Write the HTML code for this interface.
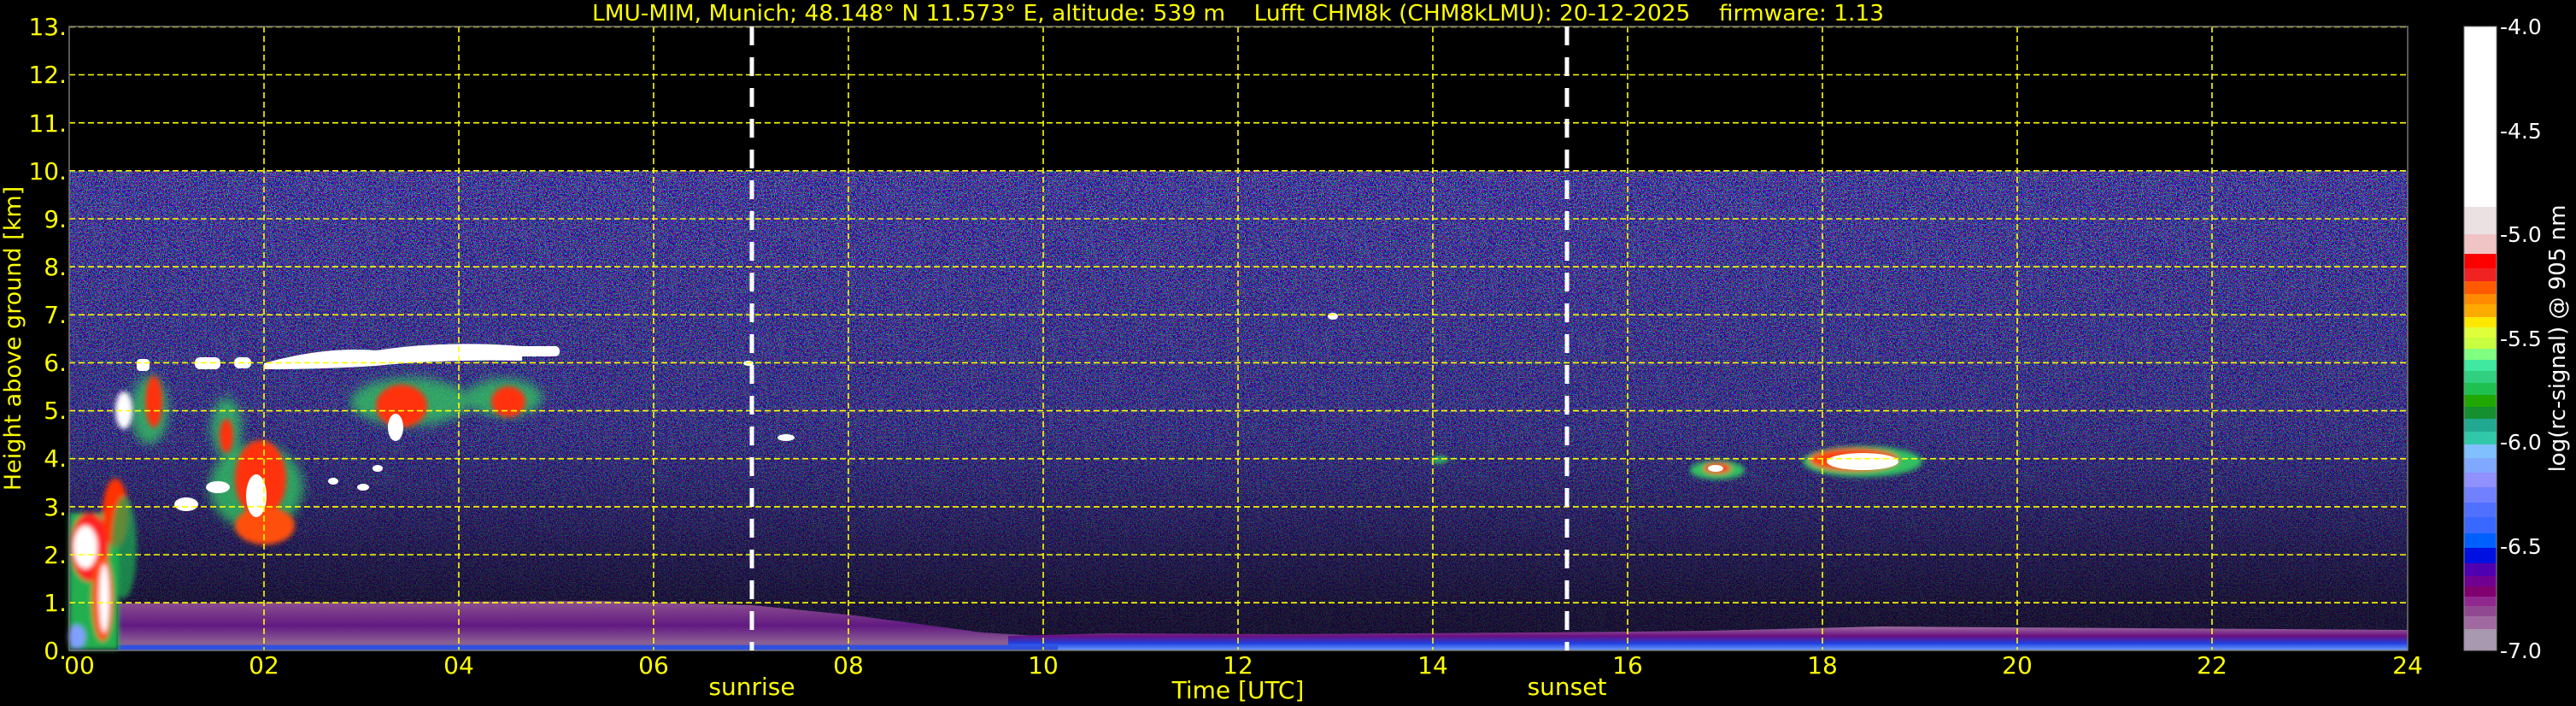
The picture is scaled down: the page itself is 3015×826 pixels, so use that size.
<!DOCTYPE html>
<html><head><meta charset="utf-8">
<style>
html,body{margin:0;padding:0;background:#000;width:3015px;height:826px;overflow:hidden}
svg{display:block}
text{font-family:"DejaVu Sans","Liberation Sans",sans-serif;fill:#ffff00;white-space:pre}
</style></head><body>
<svg width="3015" height="826" viewBox="0 0 3015 826" xmlns="http://www.w3.org/2000/svg">
<defs>
<filter id="nz" x="0" y="0" width="1" height="1" filterUnits="objectBoundingBox">
<feTurbulence type="fractalNoise" baseFrequency="0.8" numOctaves="1" seed="4" result="t"/>
<feColorMatrix in="t" values="7 -3 0 0 -2.1  -3 7 0 0 -2.2  0 -2 7 0 -1.9  0 0 0 0 1"/>
</filter>
<filter id="bl" x="-30%" y="-30%" width="160%" height="160%"><feGaussianBlur stdDeviation="3"/></filter>
<filter id="bl2" x="-30%" y="-30%" width="160%" height="160%"><feGaussianBlur stdDeviation="6"/></filter>
<linearGradient id="bg" x1="0" y1="0" x2="0" y2="1">
<stop offset="0" stop-color="#24246a"/>
<stop offset="0.5" stop-color="#1e1e58"/>
<stop offset="0.75" stop-color="#130e32"/>
<stop offset="0.9" stop-color="#0c0718"/>
<stop offset="1" stop-color="#0c0718"/>
</linearGradient>
<linearGradient id="fade" x1="0" y1="0" x2="0" y2="1">
<stop offset="0" stop-color="#fff" stop-opacity="0.75"/>
<stop offset="0.55" stop-color="#fff" stop-opacity="0.55"/>
<stop offset="0.8" stop-color="#fff" stop-opacity="0.3"/>
<stop offset="1" stop-color="#fff" stop-opacity="0.18"/>
</linearGradient>
<mask id="fm"><rect x="81" y="200" width="2737" height="561" fill="url(#fade)"/></mask>
<linearGradient id="blg" x1="0" y1="0" x2="0" y2="1">
<stop offset="0" stop-color="#9a5a9a"/>
<stop offset="0.5" stop-color="#6a1a8a"/>
<stop offset="0.85" stop-color="#9a6aa0"/>
<stop offset="1" stop-color="#3050e0"/>
</linearGradient>
<linearGradient id="blg2" x1="0" y1="0" x2="0" y2="1">
<stop offset="0" stop-color="#a070a0"/>
<stop offset="0.4" stop-color="#6a1080"/>
<stop offset="0.7" stop-color="#2040e0"/>
<stop offset="1" stop-color="#70a0ff"/>
</linearGradient>
</defs>

<rect x="81" y="200" width="2737" height="561" fill="url(#bg)"/>
<g mask="url(#fm)"><rect x="81" y="200" width="2737" height="561" filter="url(#nz)"/></g>

<path d="M138 706 L700 703 L880 708 L1000 720 L1150 740 L1230 745 L1230 761 L138 761Z" fill="url(#blg)" opacity="0.9"/>
<path d="M1180 744 L1300 741 L1500 742 L1800 740 L2000 738 L2200 733 L2500 735 L2818 737 L2818 761 L1180 761Z" fill="url(#blg2)"/>
<rect x="138" y="755" width="1100" height="6" fill="#3050e0"/>

<g filter="url(#bl)">
<rect x="81" y="600" width="58" height="160" fill="#20b050"/>
<ellipse cx="105" cy="640" rx="22" ry="40" fill="#ff2020"/>
<ellipse cx="100" cy="640" rx="14" ry="25" fill="#fff"/>
<ellipse cx="120" cy="700" rx="12" ry="50" fill="#ff5000"/>
<ellipse cx="122" cy="700" rx="6" ry="40" fill="#fff"/>
<ellipse cx="135" cy="600" rx="15" ry="40" fill="#ff3000"/>
<ellipse cx="145" cy="640" rx="15" ry="60" fill="#20b050" opacity="0.7"/>
<ellipse cx="90" cy="745" rx="10" ry="14" fill="#80a0ff"/>
</g>
<g filter="url(#bl2)" opacity="0.8">
<ellipse cx="480" cy="470" rx="70" ry="28" fill="#30c060"/>
<ellipse cx="590" cy="465" rx="45" ry="22" fill="#30c060"/>
<ellipse cx="300" cy="570" rx="55" ry="50" fill="#30c060"/>
<ellipse cx="175" cy="480" rx="22" ry="40" fill="#30c060"/>
<ellipse cx="265" cy="500" rx="18" ry="35" fill="#30c060"/>
</g>
<g filter="url(#bl)">
<ellipse cx="470" cy="475" rx="30" ry="25" fill="#ff3010"/>
<ellipse cx="595" cy="470" rx="20" ry="18" fill="#ff3010"/>
<ellipse cx="305" cy="560" rx="30" ry="45" fill="#ff3010"/>
<ellipse cx="310" cy="615" rx="35" ry="22" fill="#ff5010"/>
<ellipse cx="180" cy="470" rx="10" ry="30" fill="#ff3010"/>
<ellipse cx="145" cy="480" rx="10" ry="22" fill="#fff"/>
<ellipse cx="265" cy="510" rx="8" ry="20" fill="#ff3010"/>
</g>
<g fill="#fff">
<path d="M309 425 Q380 405 440 410 Q520 398 611 405 L611 422 Q520 420 440 428 Q380 432 309 432Z"/>
<rect x="570" y="405" width="85" height="12" rx="5"/>
<rect x="228" y="418" width="30" height="14" rx="6"/>
<rect x="274" y="418" width="20" height="13" rx="6"/>
<rect x="160" y="420" width="15" height="14" rx="4"/>
<ellipse cx="300" cy="580" rx="12" ry="25"/>
<ellipse cx="255" cy="570" rx="14" ry="7"/>
<ellipse cx="218" cy="590" rx="14" ry="8"/>
<ellipse cx="463" cy="500" rx="9" ry="16"/>
<ellipse cx="390" cy="563" rx="6" ry="4"/>
<ellipse cx="425" cy="570" rx="7" ry="4"/>
<ellipse cx="442" cy="548" rx="6" ry="4"/>
<ellipse cx="1560" cy="370" rx="6" ry="4"/>
<ellipse cx="920" cy="512" rx="10" ry="4"/>
<ellipse cx="876" cy="425" rx="6" ry="3"/>
</g>
<g filter="url(#bl)">
<ellipse cx="2180" cy="540" rx="70" ry="18" fill="#30c060"/>
<ellipse cx="2010" cy="550" rx="32" ry="11" fill="#30c060"/>
<ellipse cx="2170" cy="538" rx="52" ry="13" fill="#ff4010"/>
<ellipse cx="2010" cy="548" rx="16" ry="6" fill="#ff3010"/>
<ellipse cx="1685" cy="538" rx="10" ry="4" fill="#30c060"/>
</g>
<ellipse cx="2180" cy="540" rx="42" ry="10" fill="#fff"/>
<ellipse cx="2008" cy="548" rx="9" ry="4" fill="#fff"/>

<g stroke="#ffff00" stroke-width="1.6" stroke-dasharray="7,4" fill="none">
<path d="M81 87.5H2818M81 143.7H2818M81 199.8H2818M81 256H2818M81 312.1H2818M81 368.3H2818M81 424.4H2818M81 480.6H2818M81 536.7H2818M81 592.9H2818M81 649H2818M81 705.2H2818"/>
<path d="M309 31V761M537 31V761M765 31V761M993 31V761M1221 31V761M1449 31V761M1677 31V761M1905 31V761M2133 31V761M2361 31V761M2589 31V761"/>
<path d="M81 31.4H2818"/>
</g>
<rect x="81" y="31" width="2737" height="730" fill="none" stroke="#777" stroke-width="1.5"/>
<g stroke="#fff" stroke-width="5" stroke-dasharray="22,14">
<path d="M880 31V761M1834 31V761"/>
</g>

<text x="1449" y="24" font-size="26" text-anchor="middle" textLength="1512" lengthAdjust="spacingAndGlyphs" xml:space="preserve">LMU-MIM, Munich; 48.148° N 11.573° E, altitude: 539 m    Lufft CHM8k (CHM8kLMU): 20-12-2025    firmware: 1.13</text>

<g font-size="28" text-anchor="end">
<text x="78" y="771">0.</text><text x="78" y="715">1.</text><text x="78" y="659">2.</text><text x="78" y="603">3.</text><text x="78" y="546">4.</text><text x="78" y="490">5.</text><text x="78" y="434">6.</text><text x="78" y="378">7.</text><text x="78" y="322">8.</text><text x="78" y="266">9.</text><text x="78" y="210">10.</text><text x="78" y="154">11.</text><text x="78" y="97">12.</text><text x="78" y="41">13.</text>
</g>
<text transform="translate(24,396) rotate(-90)" font-size="27" text-anchor="middle">Height above ground [km]</text>
<g font-size="28" text-anchor="middle">
<text x="93" y="788">00</text><text x="309" y="788">02</text><text x="537" y="788">04</text><text x="765" y="788">06</text><text x="993" y="788">08</text><text x="1221" y="788">10</text><text x="1449" y="788">12</text><text x="1677" y="788">14</text><text x="1905" y="788">16</text><text x="2133" y="788">18</text><text x="2361" y="788">20</text><text x="2589" y="788">22</text><text x="2818" y="788">24</text>
<text x="880" y="813">sunrise</text><text x="1834" y="813">sunset</text>
<text x="1449" y="817">Time [UTC]</text>
</g>

<g>
<rect x="2884" y="31" width="38" height="211" fill="#fff"/>
<rect x="2884" y="242" width="38" height="33" fill="#ebe1e2"/>
<rect x="2884" y="274" width="38" height="24" fill="#f0c4c4"/>
<rect x="2884" y="297" width="38" height="18" fill="#ff0000"/>
<rect x="2884" y="314" width="38" height="16" fill="#f02222"/>
<rect x="2884" y="329" width="38" height="16" fill="#ff5a00"/>
<rect x="2884" y="344" width="38" height="13" fill="#ff8c00"/>
<rect x="2884" y="356" width="38" height="16" fill="#ffaa00"/>
<rect x="2884" y="371" width="38" height="13" fill="#ffe800"/>
<rect x="2884" y="383" width="38" height="13" fill="#dfff3a"/>
<rect x="2884" y="395" width="38" height="14" fill="#c8ff40"/>
<rect x="2884" y="408" width="38" height="14" fill="#80ff80"/>
<rect x="2884" y="421" width="38" height="14" fill="#40e8a0"/>
<rect x="2884" y="434" width="38" height="15" fill="#30d080"/>
<rect x="2884" y="448" width="38" height="15" fill="#20c050"/>
<rect x="2884" y="462" width="38" height="15" fill="#20a800"/>
<rect x="2884" y="476" width="38" height="15" fill="#158f30"/>
<rect x="2884" y="490" width="38" height="16" fill="#20a890"/>
<rect x="2884" y="505" width="38" height="16" fill="#30c8a8"/>
<rect x="2884" y="520" width="38" height="17" fill="#80c0ff"/>
<rect x="2884" y="536" width="38" height="18" fill="#80a8ff"/>
<rect x="2884" y="553" width="38" height="18" fill="#9090ff"/>
<rect x="2884" y="570" width="38" height="19" fill="#7080ff"/>
<rect x="2884" y="588" width="38" height="18" fill="#5070ff"/>
<rect x="2884" y="605" width="38" height="20" fill="#3868ff"/>
<rect x="2884" y="624" width="38" height="18" fill="#0060ff"/>
<rect x="2884" y="641" width="38" height="19" fill="#0010e0"/>
<rect x="2884" y="659" width="38" height="16" fill="#5000b0"/>
<rect x="2884" y="674" width="38" height="13" fill="#700090"/>
<rect x="2884" y="686" width="38" height="13" fill="#800070"/>
<rect x="2884" y="698" width="38" height="12" fill="#902890"/>
<rect x="2884" y="709" width="38" height="13" fill="#904890"/>
<rect x="2884" y="721" width="38" height="16" fill="#a06aa0"/>
<rect x="2884" y="736" width="38" height="25" fill="#a898b0"/>
<rect x="2884" y="31" width="38" height="730" fill="none" stroke="#888" stroke-width="1"/>
</g>
<g font-size="25">
<text x="2926" y="40" style="fill:#fff">-4.0</text>
<text x="2926" y="162" style="fill:#fff">-4.5</text>
<text x="2926" y="283" style="fill:#fff">-5.0</text>
<text x="2926" y="405" style="fill:#fff">-5.5</text>
<text x="2926" y="526" style="fill:#fff">-6.0</text>
<text x="2926" y="648" style="fill:#fff">-6.5</text>
<text x="2926" y="770" style="fill:#fff">-7.0</text>
</g>
<text transform="translate(3002,396) rotate(-90)" font-size="26" text-anchor="middle" style="fill:#fff">log(rc-signal) @ 905 nm</text>
</svg>
</body></html>
